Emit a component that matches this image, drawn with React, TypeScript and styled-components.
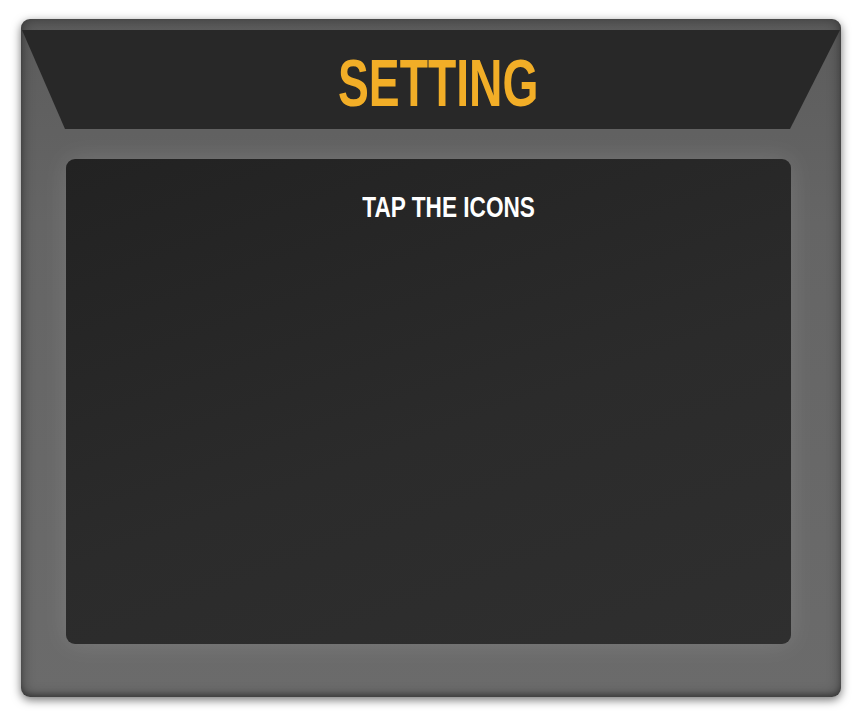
import React from "react";
import styled, { createGlobalStyle } from "styled-components";

const Global = createGlobalStyle`
  html, body { margin: 0; padding: 0; background: #ffffff; }
  body { font-family: "Liberation Sans", Arial, sans-serif; }
`;

const Page = styled.div`
  width: 864px;
  height: 721px;
  padding: 19px 23px 24px 21px;
  box-sizing: border-box;
  display: flex;
`;

const Frame = styled.div`
  flex: 1;
  display: flex;
  flex-direction: column;
  border-radius: 9px;
  background: linear-gradient(180deg, #5c5c5c 0%, #656565 30%, #6b6b6b 100%);
  box-shadow: 0 3px 10px rgba(0, 0, 0, 0.55),
    inset 0 0 14px rgba(0, 0, 0, 0.4),
    inset 0 -3px 4px rgba(0, 0, 0, 0.25);
  padding: 11px 1px 53px 1px;
  box-sizing: border-box;
`;

const Header = styled.div`
  height: 99px;
  background: #282828;
  clip-path: polygon(0 0, 100% 0, calc(100% - 50px) 100%, 43px 100%);
  display: flex;
  align-items: center;
  justify-content: center;
  padding-left: 15px;
  box-sizing: border-box;
`;

const Title = styled.h1`
  margin: 0;
  font-family: "Liberation Sans", Arial, sans-serif;
  font-weight: 700;
  font-size: 67px;
  line-height: 1;
  color: #f2ae27;
  transform: translateY(3px) scaleX(0.69);
`;

const Panel = styled.div`
  flex: 1;
  margin: 30px 49px 0 44px;
  border-radius: 9px;
  background: linear-gradient(160deg, #222222 0%, #2b2b2b 55%, #2f2f2f 100%);
  box-shadow: 0 0 26px rgba(255, 255, 255, 0.12);
  display: flex;
  flex-direction: column;
  align-items: center;
  padding-top: 34px;
  padding-left: 40px;
  box-sizing: border-box;
`;

const Hint = styled.div`
  font-family: "Liberation Sans", Arial, sans-serif;
  font-weight: 700;
  font-size: 29px;
  line-height: 1;
  color: #ffffff;
  transform: scaleX(0.78);
`;

export default function App() {
  return (
    <>
      <Global />
      <Page>
        <Frame>
          <Header>
            <Title>SETTING</Title>
          </Header>
          <Panel>
            <Hint>TAP THE ICONS</Hint>
          </Panel>
        </Frame>
      </Page>
    </>
  );
}
